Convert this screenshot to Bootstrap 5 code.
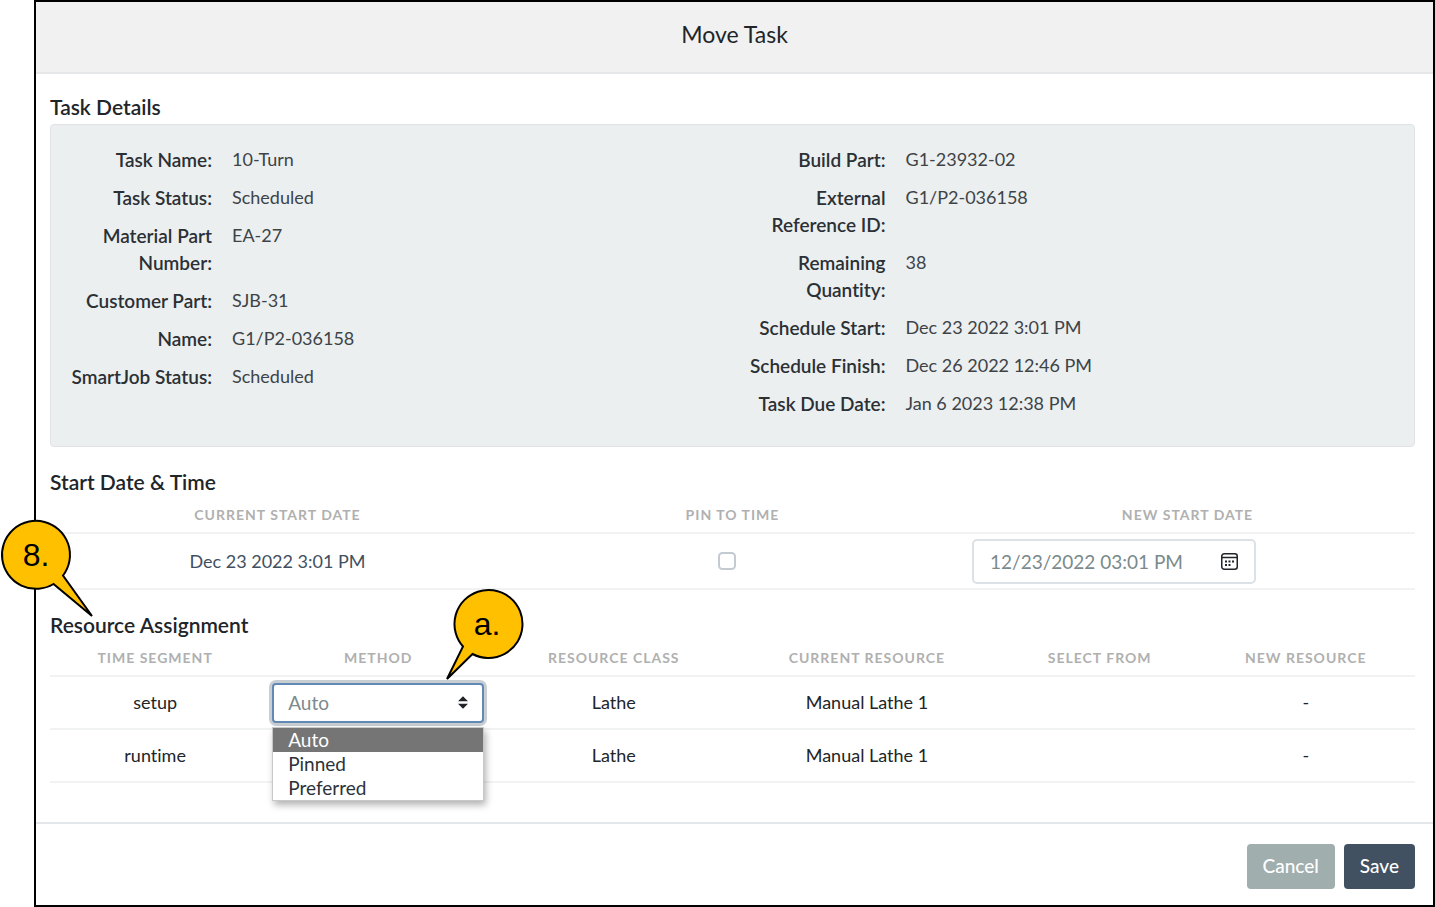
<!DOCTYPE html>
<html lang="en">
<head>
<meta charset="utf-8">
<meta name="viewport" content="width=device-width, initial-scale=1">
<title>Move Task</title>
<link href="https://cdn.jsdelivr.net/npm/bootstrap@5.3.0/dist/css/bootstrap.min.css" rel="stylesheet">
<style>
  body { font-family: Lato, "Liberation Sans", sans-serif; font-size: 18px; line-height: 27px; font-variant-ligatures: none; color: #212529; background: #fff; }
  .task-dialog { margin-left: 34px; border: 2px solid #000; }
  .task-header { background: #f1f1f1; border-bottom: 2px solid #e6e7e8; padding: 17px 0 23px; }
  .task-header h1 { font-size: 23px; line-height: 30px; font-weight: 400; }
  .task-body { padding: 18px 18px 39px 14px; }
  .section-title { font-size: 21px; line-height: 30px; font-weight: 600; color: #212529; }
  .details { background: #ebeff0; border: 1px solid #dfe3e7; border-radius: 4px; padding: 21px 0 28px; margin: 2px 0 20px; min-height: 323px; color: #3e4347; }
  .detail-list { display: grid; grid-template-columns: 161px 1fr; column-gap: 20px; row-gap: 11px; }
  .detail-list.second { grid-template-columns: 153px 1fr; }
  .detail-list dt { font-size: 19px; font-weight: 600; text-align: right; color: #2b3035; padding-left: 10px; }
  .detail-list dd { margin: 0; }
  .grid-table { table-layout: fixed; width: 100%; text-align: center; border-collapse: collapse; }
  .grid-table th { font-size: 14px; line-height: 20px; font-weight: 700; color: #b0b0b0; text-transform: uppercase; letter-spacing: 1px; padding: 8px 0 7px; }
  .grid-table td { padding: 0 12px; height: 56px; vertical-align: middle; }
  .grid-table tr { border-bottom: 2px solid #f1f3f3; }
  .dates { margin-bottom: 20px; }
  .dates td:first-child { color: #41505f; }
  .assign td { height: 53px; }
  .date-box { width: 284px; height: 45px; }
  .date-box .form-control { height: 45px; font-size: 19px; color: #7b8a8b; border: 2px solid #dce1e6; border-radius: 5px; padding: 0 50px 0 16px; }
  .date-box button { position: absolute; right: 17px; top: 13px; width: 19px; height: 19px; padding: 0; border: 0; background: none; line-height: 0; }
  .pin { width: 18px; height: 18px; margin: 0 12px 4px 0; border: 2px solid #c3cad1; border-radius: 5px; vertical-align: middle; }
  .method-select { height: 40px; font-size: 19px; line-height: 27px; color: #7b8a8b; border: 2px solid #6288b5; border-radius: 4px; padding: 0 40px 0 14px; box-shadow: 0 0 0 3px #c9ced3;
    background-image: url("data:image/svg+xml,%3Csvg xmlns='http://www.w3.org/2000/svg' viewBox='0 0 4 5'%3E%3Cpath fill='%23212529' d='M2 0L0 2h4zm0 5L0 3h4z'/%3E%3C/svg%3E"); background-size: 10px 13px; background-position: right 14px center; }
  .method-select:focus { box-shadow: 0 0 0 3px #c9ced3; }
  .options { position: absolute; z-index: 3; top: 44px; left: 0; right: 0; margin: 0; padding: 0; list-style: none; background: #fff; border: 1px solid #c8c8c8; box-shadow: 2px 4px 7px rgba(0,0,0,.3); text-align: left; font-size: 19px; }
  .options li { padding: 0 15px; line-height: 24px; color: #2d3238; }
  .options .active { background: #757575; color: #fff; }
  .callout { position: absolute; z-index: 5; overflow: visible; pointer-events: none; }
  .callout path { fill: #ffc000; stroke: #000; stroke-width: 2; }
  .callout text { font: 32px "Liberation Sans", Arial, sans-serif; text-anchor: middle; fill: #000; }
  .callout-step { left: -50px; top: -90px; }
  .callout-sub { right: -38px; top: -94px; }
  .task-footer { border-top: 2px solid #e4e7ea; padding: 20px 18px 16px; gap: 9px; }
  .task-footer .btn { height: 45px; padding: 0 16px; border: 0; border-radius: 4px; font-size: 19px; font-weight: 500; color: #fff; }
  .btn-cancel, .btn-cancel:hover { background: #a0aeae; }
  .btn-save, .btn-save:hover { background: #415161; }
</style>
</head>
<body>
<main class="task-dialog">
  <header class="task-header text-center"><h1 class="m-0">Move Task</h1></header>

  <div class="task-body">
    <h2 class="section-title m-0">Task Details</h2>
    <div class="details row gx-0">
      <dl class="detail-list col-6 m-0 align-content-start">
        <dt>Task Name:</dt><dd>10-Turn</dd>
        <dt>Task Status:</dt><dd>Scheduled</dd>
        <dt>Material Part Number:</dt><dd>EA-27</dd>
        <dt>Customer Part:</dt><dd>SJB-31</dd>
        <dt>Name:</dt><dd>G1/P2-036158</dd>
        <dt>SmartJob Status:</dt><dd>Scheduled</dd>
      </dl>
      <dl class="detail-list second col-6 m-0 align-content-start">
        <dt>Build Part:</dt><dd>G1-23932-02</dd>
        <dt>External Reference ID:</dt><dd>G1/P2-036158</dd>
        <dt>Remaining Quantity:</dt><dd>38</dd>
        <dt>Schedule Start:</dt><dd>Dec 23 2022 3:01 PM</dd>
        <dt>Schedule Finish:</dt><dd>Dec 26 2022 12:46 PM</dd>
        <dt>Task Due Date:</dt><dd>Jan 6 2023 12:38 PM</dd>
      </dl>
    </div>

    <h2 class="section-title m-0">Start Date &amp; Time</h2>
    <table class="grid-table dates">
      <thead><tr><th>Current Start Date</th><th id="pin-label">Pin to Time</th><th id="date-label">New Start Date</th></tr></thead>
      <tbody>
        <tr>
          <td>Dec 23 2022 3:01 PM</td>
          <td><input class="form-check-input pin" type="checkbox" aria-labelledby="pin-label"></td>
          <td>
            <div class="date-box position-relative">
              <input class="form-control" type="text" value="12/23/2022 03:01 PM" aria-labelledby="date-label">
              <button type="button" aria-label="Open calendar">
                <svg width="19" height="19" viewBox="0 0 19 19" fill="none" stroke="#212529" stroke-width="2">
                  <rect x="1.750" y="1.750" width="15.500" height="15.500" rx="2.500" stroke-width="1.500"/><path d="M2 5.500h15" stroke-width="1.500"/>
                  <path d="M5 9.500h2m1.500 0h2m1.500 0h2M5 13h2m1.500 0h2"/>
                </svg>
              </button>
            </div>
          </td>
        </tr>
      </tbody>
    </table>

    <div class="position-relative">
      <h2 class="section-title m-0" id="assign">Resource Assignment</h2>
      <svg class="callout callout-step" width="92" height="96" viewBox="0 0 92 96" role="img" aria-label="Step 8">
        <path d="M53.500 64A34 34 0 1 1 63 55.500L92 96Z"/>
        <text x="36" y="46">8.</text>
      </svg>
    </div>
    <table class="grid-table assign" aria-labelledby="assign">
      <colgroup>
        <col style="width:15.4%"><col style="width:17.3%"><col style="width:17.2%"><col style="width:19.9%"><col style="width:14.2%"><col style="width:16%">
      </colgroup>
      <thead><tr><th>Time Segment</th><th id="method-label">Method</th><th>Resource Class</th><th>Current Resource</th><th>Select From</th><th>New Resource</th></tr></thead>
      <tbody>
        <tr>
          <td>setup</td>
          <td>
            <div class="position-relative">
              <select class="form-select method-select" aria-labelledby="method-label"><option>Auto</option><option>Pinned</option><option>Preferred</option></select>
              <ul class="options"><li class="active">Auto</li><li>Pinned</li><li>Preferred</li></ul>
              <svg class="callout callout-sub" width="77" height="92" viewBox="0 0 77 92" role="img" aria-label="Step a">
                <path d="M18 57.500A34 34 0 1 1 27.500 65L2 90Z"/>
                <text x="42" y="46">a.</text>
              </svg>
            </div>
          </td>
          <td>Lathe</td><td>Manual Lathe 1</td><td></td><td>-</td>
        </tr>
        <tr><td>runtime</td><td></td><td>Lathe</td><td>Manual Lathe 1</td><td></td><td>-</td></tr>
      </tbody>
    </table>
  </div>

  <footer class="task-footer d-flex justify-content-end">
    <button type="button" class="btn btn-cancel">Cancel</button>
    <button type="button" class="btn btn-save">Save</button>
  </footer>
</main>
<script src="https://cdn.jsdelivr.net/npm/bootstrap@5.3.0/dist/js/bootstrap.bundle.min.js"></script>
</body>
</html>
